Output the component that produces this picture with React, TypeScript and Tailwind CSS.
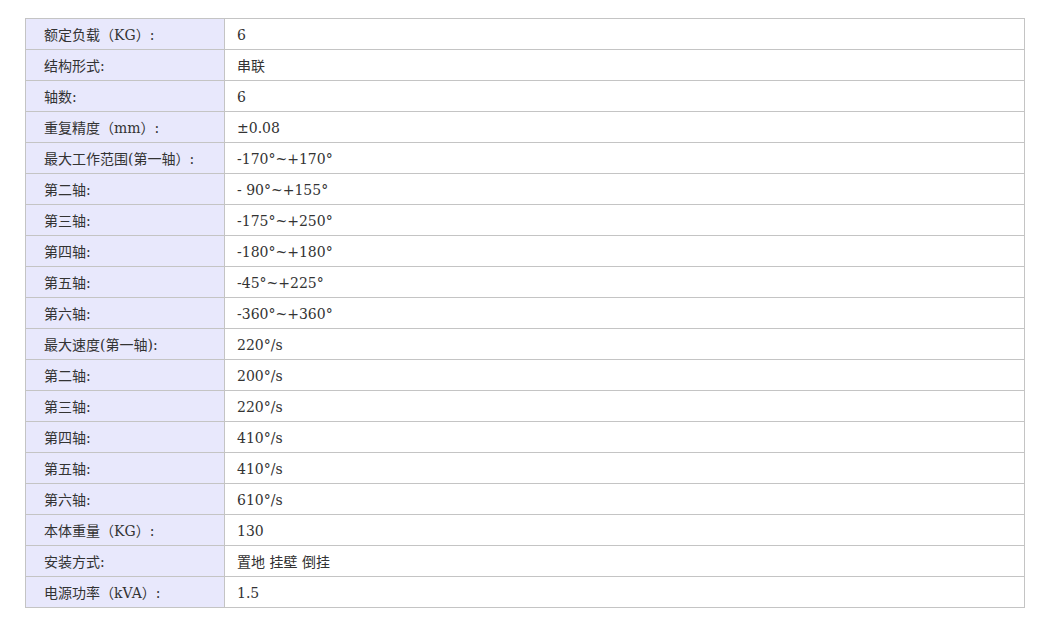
const rows: [string, string][] = [
  ["额定负载（KG）:", "6"],
  ["结构形式:", "串联"],
  ["轴数:", "6"],
  ["重复精度（mm）:", "±0.08"],
  ["最大工作范围(第一轴）:", "-170°~+170°"],
  ["第二轴:", "- 90°~+155°"],
  ["第三轴:", "-175°~+250°"],
  ["第四轴:", "-180°~+180°"],
  ["第五轴:", "-45°~+225°"],
  ["第六轴:", "-360°~+360°"],
  ["最大速度(第一轴):", "220°/s"],
  ["第二轴:", "200°/s"],
  ["第三轴:", "220°/s"],
  ["第四轴:", "410°/s"],
  ["第五轴:", "410°/s"],
  ["第六轴:", "610°/s"],
  ["本体重量（KG）:", "130"],
  ["安装方式:", "置地 挂壁 倒挂"],
  ["电源功率（kVA）:", "1.5"],
];

export default function App() {
  return (
    <div className="min-h-[630px] bg-white pl-[25px] pt-[18px] font-['DejaVu_Serif','Noto_Sans_CJK_SC',serif] text-[14px] text-[#333]">
      <table className="w-[1000px] border-collapse border border-[#c4c4c4]">
        <tbody>
          {rows.map(([label, value], i) => (
            <tr key={i} className="h-[31px]">
              <td className="w-[199px] border border-[#c4c4c4] bg-[#e8e8fc] pl-[18px] pt-[1px] align-middle leading-none">
                {label}
              </td>
              <td className="border border-[#c4c4c4] pl-[12px] pt-[1px] align-middle leading-none">{value}</td>
            </tr>
          ))}
        </tbody>
      </table>
    </div>
  );
}
